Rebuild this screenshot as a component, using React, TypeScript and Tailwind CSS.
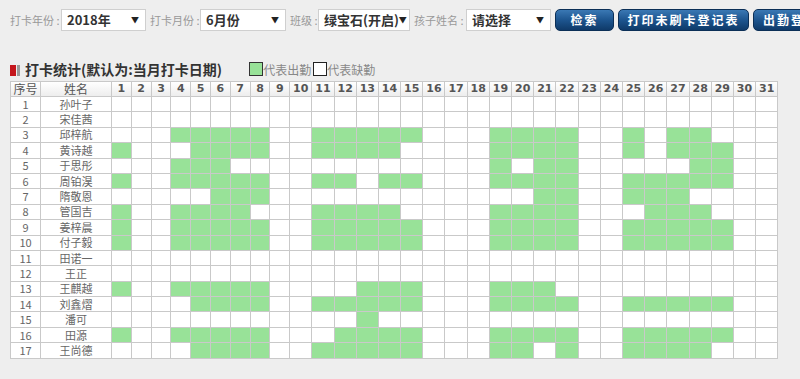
import React from 'react';

const names = [
  '孙叶子', '宋佳茜', '邱梓航', '黄诗越', '于思彤', '周铂淏', '隋敬恩', '管国吉', '姜梓晨',
  '付子毅', '田诺一', '王正', '王麒越', '刘鑫熠', '潘可', '田源', '王尚德',
];

// attendance per row, as day ranges
const present: string[] = [
  '',
  '',
  '4-8,11-15,19-22,25,27-28',
  '1,5-8,11-14,19-22,25,27-29',
  '4-6,19,21-22,28-29',
  '1,4-8,11-12,14-15,19-22,25-29',
  '6-8,21-22,25-27',
  '1,4-7,11-14,19-22,26-28',
  '1,4-8,11-15,19-22,25-29',
  '1,4-8,11-15,19-22,25-29',
  '',
  '',
  '1,4-8,13-15,19-21',
  '5-8,11-15,19-22,25-29',
  '13',
  '1,4-8,12-15,19-22,25-29',
  '5-8,11-15,19-20,22,25-28',
];

const parseDays = (s: string) => {
  const set = new Set<number>();
  s.split(',').filter(Boolean).forEach((part) => {
    const [a, b] = part.split('-').map(Number);
    for (let d = a; d <= (b ?? a); d++) set.add(d);
  });
  return set;
};

const days = Array.from({ length: 31 }, (_, i) => i + 1);

const Select = ({ value, width }: { value: string; width: string }) => (
  <div className={`${width} shrink-0 h-[22px] bg-white border border-[#cfcfcf] flex items-center justify-between pl-[5px] pr-[6px] mr-[4px]`}>
    <span className="text-[13px] font-bold text-[#333]">{value}</span>
    <span className="text-[8px] text-[#222]">▼</span>
  </div>
);

const Label = ({ text, width }: { text: string; width: string }) => (
  <span className={`${width} shrink-0 text-[11px] text-[#999] whitespace-nowrap`}>{text} :</span>
);

const Button = ({ text, width }: { text: string; width: string }) => (
  <button className={`${width} h-[22px] shrink-0 mr-[4px] rounded-[5px] border border-[#0b2f57] bg-gradient-to-b from-[#3a78b4] via-[#1d558f] to-[#0f3a69] text-white text-[12px] font-bold tracking-[2px] whitespace-nowrap overflow-hidden`}>
    {text}
  </button>
);

export default function App() {
  return (
    <div className="w-[800px] h-[379px] overflow-hidden bg-[#eeeeee] font-['Noto_Sans_CJK_SC',sans-serif]">
      {/* toolbar */}
      <div className="flex items-center pt-[9px] pl-[10px] whitespace-nowrap">
        <Label text="打卡年份" width="w-[51px]" />
        <Select value="2018年" width="w-[85px]" />
        <Label text="打卡月份" width="w-[50px]" />
        <Select value="6月份" width="w-[86px]" />
        <Label text="班级" width="w-[28px]" />
        <Select value="绿宝石(开启)" width="w-[92px]" />
        <Label text="孩子姓名" width="w-[52px]" />
        <Select value="请选择" width="w-[85px]" />
        <Button text="检索" width="w-[59px]" />
        <Button text="打印未刷卡登记表" width="w-[131px]" />
        <Button text="出勤登记表" width="w-[90px]" />
      </div>

      {/* title + legend */}
      <div className="flex items-end pl-[10px] mt-[28px] h-[20px]">
        <span className="w-[6px] h-[11px] bg-[#c4161c] mb-[3px]" />
        <span className="w-[3px] h-[11px] bg-[#999] ml-[1px] mb-[3px]" />
        <span className="ml-[5px] text-[14px] font-bold text-[#333] leading-[20px]">打卡统计(默认为:当月打卡日期)</span>
        <span className="ml-[27px] w-[14px] h-[14px] bg-[#98e298] border border-[#333] mb-[3px]" />
        <span className="text-[12px] text-[#888] leading-[18px]">代表出勤</span>
        <span className="ml-[2px] w-[14px] h-[14px] bg-white border border-[#222] mb-[3px]" />
        <span className="text-[12px] text-[#888] leading-[18px]">代表缺勤</span>
      </div>

      {/* table */}
      <div className="pl-[10px] mt-[2px]">
        <table className="table-fixed border-collapse w-[768px] bg-white text-center">
          <colgroup>
            <col className="w-[30px]" />
            <col className="w-[71px]" />
            {days.map((d) => (
              <col key={d} className={d < 10 ? 'w-[19.8px]' : 'w-[22.2px]'} />
            ))}
          </colgroup>
          <thead>
            <tr className="bg-gradient-to-b from-white to-[#ececec]">
              <th className="h-[15px] p-0 border border-[#c9c9c9] text-[12px] font-normal text-[#555] leading-[14px]">序号</th>
              <th className="h-[15px] p-0 border border-[#c9c9c9] text-[12px] font-normal text-[#555] leading-[14px]">姓名</th>
              {days.map((d) => (
                <th key={d} className="h-[15px] p-0 border border-[#c9c9c9] text-[11px] font-bold text-[#555] leading-[14px] font-['DejaVu_Sans',sans-serif]">
                  {d}
                </th>
              ))}
            </tr>
          </thead>
          <tbody>
            {names.map((name, i) => {
              const set = parseDays(present[i]);
              return (
                <tr key={name}>
                  <td className="h-[15.4px] p-0 border border-[#c9c9c9] text-[11px] text-[#666] leading-[13px]">{i + 1}</td>
                  <td className="h-[15.4px] p-0 border border-[#c9c9c9] text-[11px] text-[#666] leading-[13px]">{name}</td>
                  {days.map((d) => (
                    <td
                      key={d}
                      className={`h-[15.4px] p-0 border border-[#c9c9c9] ${set.has(d) ? 'bg-[#98e298]' : 'bg-white'}`}
                    />
                  ))}
                </tr>
              );
            })}
          </tbody>
        </table>
      </div>
    </div>
  );
}
